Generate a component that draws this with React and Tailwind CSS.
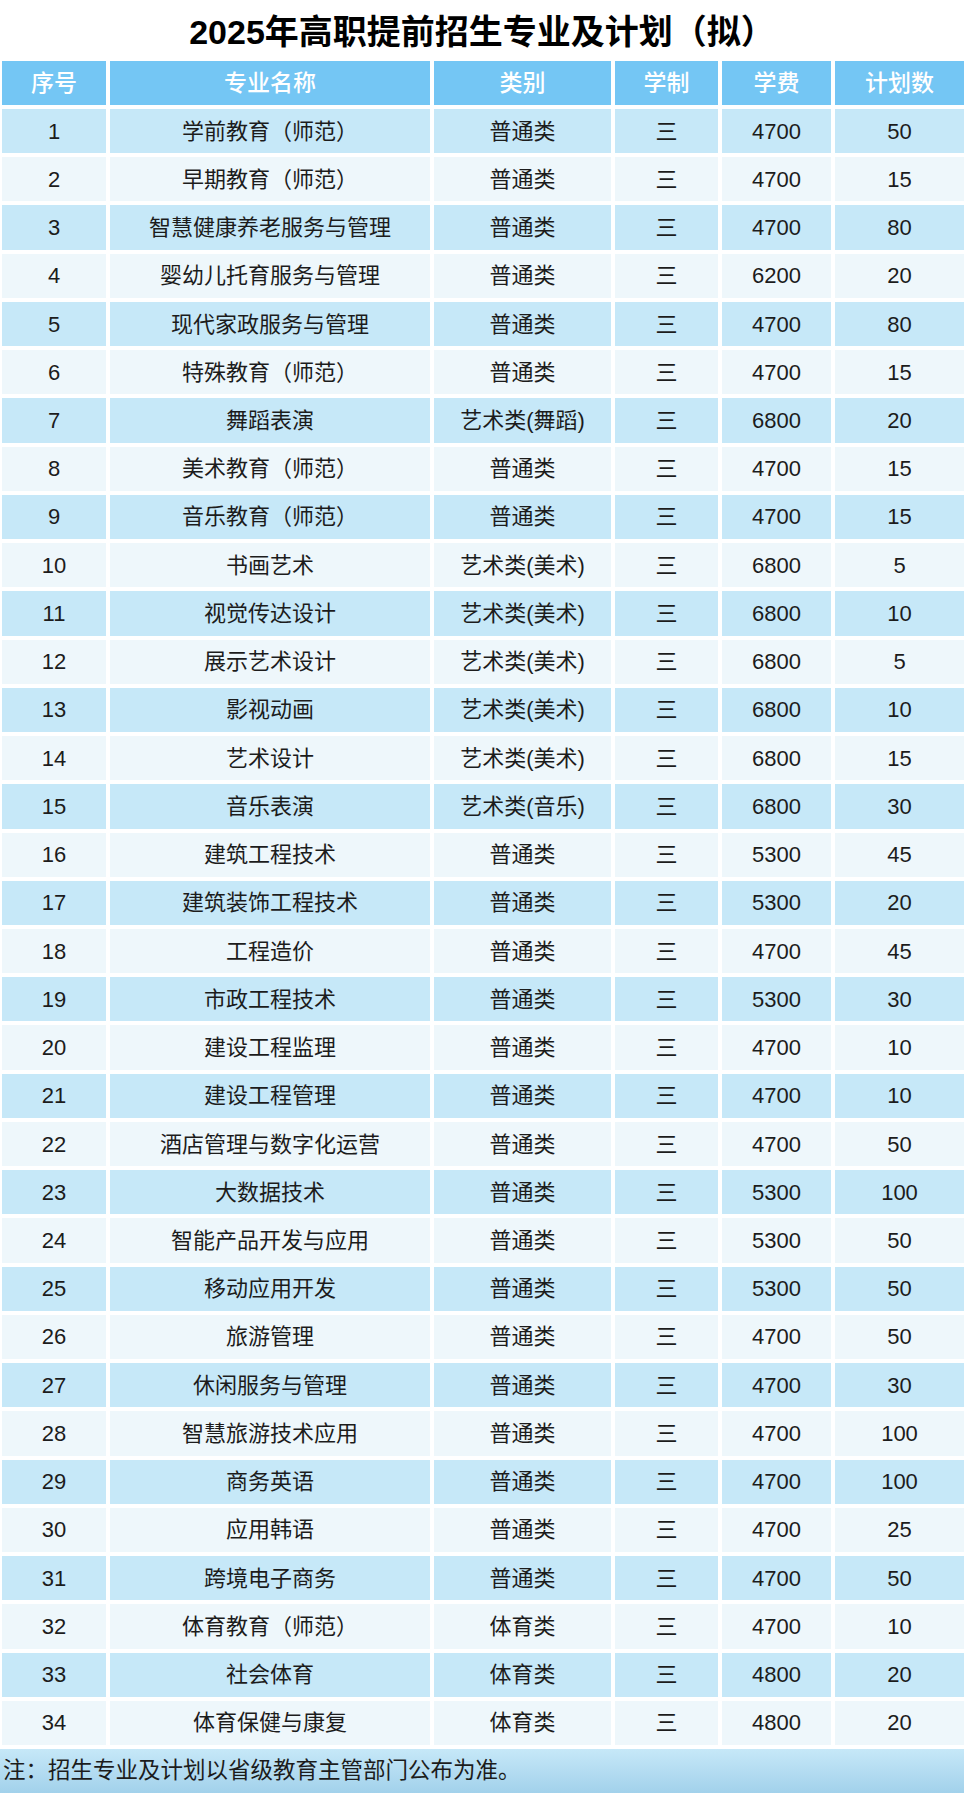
const rows = [
  ['1', '学前教育（师范）', '普通类', '4700', '50'],
  ['2', '早期教育（师范）', '普通类', '4700', '15'],
  ['3', '智慧健康养老服务与管理', '普通类', '4700', '80'],
  ['4', '婴幼儿托育服务与管理', '普通类', '6200', '20'],
  ['5', '现代家政服务与管理', '普通类', '4700', '80'],
  ['6', '特殊教育（师范）', '普通类', '4700', '15'],
  ['7', '舞蹈表演', '艺术类(舞蹈)', '6800', '20'],
  ['8', '美术教育（师范）', '普通类', '4700', '15'],
  ['9', '音乐教育（师范）', '普通类', '4700', '15'],
  ['10', '书画艺术', '艺术类(美术)', '6800', '5'],
  ['11', '视觉传达设计', '艺术类(美术)', '6800', '10'],
  ['12', '展示艺术设计', '艺术类(美术)', '6800', '5'],
  ['13', '影视动画', '艺术类(美术)', '6800', '10'],
  ['14', '艺术设计', '艺术类(美术)', '6800', '15'],
  ['15', '音乐表演', '艺术类(音乐)', '6800', '30'],
  ['16', '建筑工程技术', '普通类', '5300', '45'],
  ['17', '建筑装饰工程技术', '普通类', '5300', '20'],
  ['18', '工程造价', '普通类', '4700', '45'],
  ['19', '市政工程技术', '普通类', '5300', '30'],
  ['20', '建设工程监理', '普通类', '4700', '10'],
  ['21', '建设工程管理', '普通类', '4700', '10'],
  ['22', '酒店管理与数字化运营', '普通类', '4700', '50'],
  ['23', '大数据技术', '普通类', '5300', '100'],
  ['24', '智能产品开发与应用', '普通类', '5300', '50'],
  ['25', '移动应用开发', '普通类', '5300', '50'],
  ['26', '旅游管理', '普通类', '4700', '50'],
  ['27', '休闲服务与管理', '普通类', '4700', '30'],
  ['28', '智慧旅游技术应用', '普通类', '4700', '100'],
  ['29', '商务英语', '普通类', '4700', '100'],
  ['30', '应用韩语', '普通类', '4700', '25'],
  ['31', '跨境电子商务', '普通类', '4700', '50'],
  ['32', '体育教育（师范）', '体育类', '4700', '10'],
  ['33', '社会体育', '体育类', '4800', '20'],
  ['34', '体育保健与康复', '体育类', '4800', '20'],
];

const headers = ['序号', '专业名称', '类别', '学制', '学费', '计划数'];

const font = { fontFamily: '"Liberation Sans", "Noto Sans CJK SC", sans-serif' };

const gridCols = 'grid grid-cols-[104px_320px_177px_103px_109px_1fr] gap-x-[4px] pl-[2px]';

export default function App() {
  return (
    <div className="w-[964px] h-[1793px] bg-white overflow-hidden" style={font}>
      {/* Title */}
      <div className="h-[61px] flex items-center justify-center">
        <h1 className="text-[34px] font-bold text-black leading-none pt-[2px]">
          2025年高职提前招生专业及计划（拟）
        </h1>
      </div>

      <div className="flex flex-col gap-y-[4px]">
        {/* Header */}
        <div className={gridCols}>
          {headers.map((h) => (
            <div
              key={h}
              className="h-[44px] bg-[#74c6f4] flex items-center justify-center text-white text-[23px] font-medium"
            >
              {h}
            </div>
          ))}
        </div>

        {/* Rows */}
        {rows.map((r, idx) => {
          const bg = idx % 2 === 0 ? 'bg-[#c6e8f8]' : 'bg-[#eef7fb]';
          const cells = [r[0], r[1], r[2], '三', r[3], r[4]];
          return (
            <div key={r[0]} className={gridCols}>
              {cells.map((c, i) => (
                <div
                  key={i}
                  className={`h-[44.24px] ${bg} flex items-center justify-center text-[22px] text-[#1c1c1c]`}
                >
                  {c}
                </div>
              ))}
            </div>
          );
        })}

        {/* Footer note */}
        <div className="h-[44px] bg-gradient-to-b from-[#c6e8f8] to-[#a2d1eb] flex items-center pl-[3px] text-[22.5px] text-[#1c1c1c]">
          注：招生专业及计划以省级教育主管部门公布为准。
        </div>
      </div>
    </div>
  );
}
